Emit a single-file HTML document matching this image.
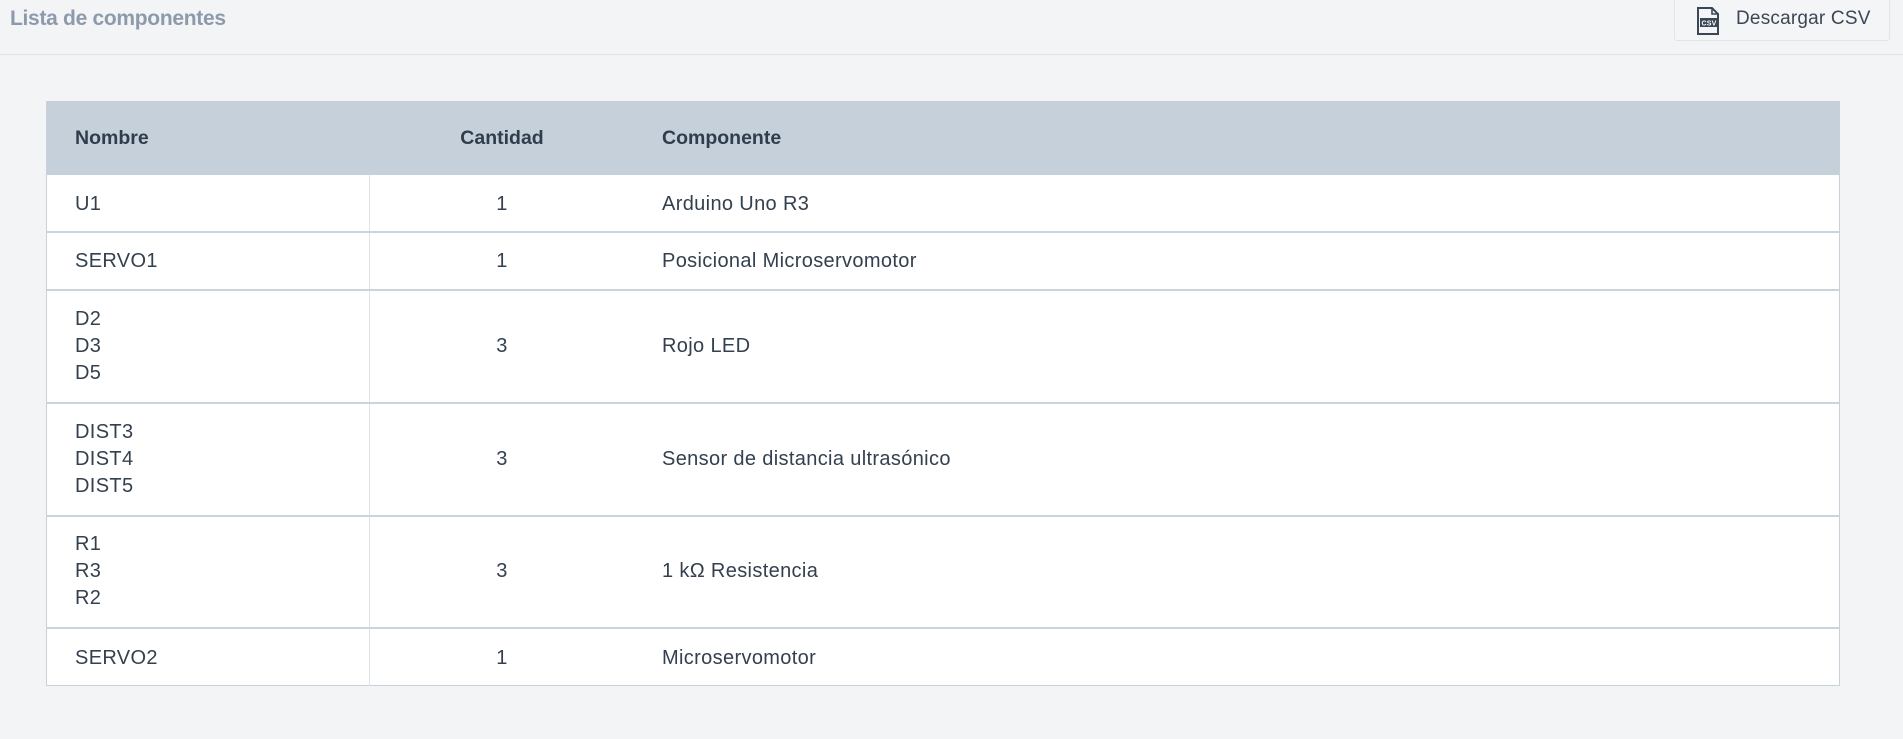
<!DOCTYPE html>
<html><head><meta charset="utf-8"><style>
*{box-sizing:border-box;margin:0;padding:0}
body{width:1903px;height:739px;background:#f3f4f6;font-family:"Liberation Sans",Arial,sans-serif;position:relative;overflow:hidden;color:#34404f}
.title{position:absolute;left:10px;top:7px;font-size:21px;color:#8d9aab;font-weight:bold;letter-spacing:-0.3px}
.hline{position:absolute;left:0;top:54px;width:1903px;height:1px;background:#dfe3e8}
.btn{position:absolute;left:1674px;top:-2px;width:216px;height:43px;border:1px solid #e1e5ea;border-radius:3px;background:#f4f5f7;font-size:19px;color:#3c4756;letter-spacing:0.2px}
.btn span{position:absolute;left:61px;top:9px}
.btn svg{position:absolute;left:20px;top:7px}
.tbl{position:absolute;left:46px;top:101px;width:1794px;height:585px;background:#fff;border:1px solid #c8d0d8}
.head{position:absolute;left:0;top:0;width:100%;height:73px;background:#c5d0da;font-weight:bold;font-size:19.5px;color:#2f3d4d}
.row{position:absolute;left:0;width:100%;border-bottom:2px solid #cbd3db;font-size:20px;line-height:27px;letter-spacing:0.35px}
.row:last-child{border-bottom:none}
.c1{position:absolute;left:28px}
.c2{position:absolute;left:402px;width:106px;text-align:center}
.c3{position:absolute;left:615px}
.vd{position:absolute;left:322px;top:73px;width:1px;height:511px;background:#dfe3e8}
</style></head><body>
<div class="title">Lista de componentes</div>
<div class="hline"></div>
<div class="btn"><svg width="26" height="30" viewBox="0 0 26 30"><path d="M3 2h14l6 6v20H3z" fill="none" stroke="#3c4756" stroke-width="2"/><path d="M17 2v6h6" fill="none" stroke="#3c4756" stroke-width="1.6"/><rect x="5" y="12" width="18" height="9" fill="#3c4756"/><text x="14" y="19.5" font-size="7" font-family="Liberation Sans" font-weight="bold" fill="#fff" text-anchor="middle">CSV</text></svg><span>Descargar CSV</span></div>
<div class="tbl">
<div class="head"><span class="c1" style="top:25px">Nombre</span><span class="c2" style="top:25px;left:398px;width:114px">Cantidad</span><span class="c3" style="top:25px">Componente</span></div>
<div class="vd"></div>
<div class="row" style="top:73px;height:58px"><span class="c1" style="top:16px">U1</span><span class="c2" style="top:16px">1</span><span class="c3" style="top:16px">Arduino Uno R3</span></div>
<div class="row" style="top:131px;height:58px"><span class="c1" style="top:15px">SERVO1</span><span class="c2" style="top:15px">1</span><span class="c3" style="top:15px">Posicional Microservomotor</span></div>
<div class="row" style="top:189px;height:113px"><span class="c1" style="top:15px">D2<br>D3<br>D5</span><span class="c2" style="top:42px">3</span><span class="c3" style="top:42px">Rojo LED</span></div>
<div class="row" style="top:302px;height:113px"><span class="c1" style="top:15px">DIST3<br>DIST4<br>DIST5</span><span class="c2" style="top:42px">3</span><span class="c3" style="top:42px">Sensor de distancia ultrasónico</span></div>
<div class="row" style="top:415px;height:112px"><span class="c1" style="top:14px">R1<br>R3<br>R2</span><span class="c2" style="top:41px">3</span><span class="c3" style="top:41px">1 kΩ Resistencia</span></div>
<div class="row" style="top:527px;height:57px"><span class="c1" style="top:16px">SERVO2</span><span class="c2" style="top:16px">1</span><span class="c3" style="top:16px">Microservomotor</span></div>
</div>
</body></html>
